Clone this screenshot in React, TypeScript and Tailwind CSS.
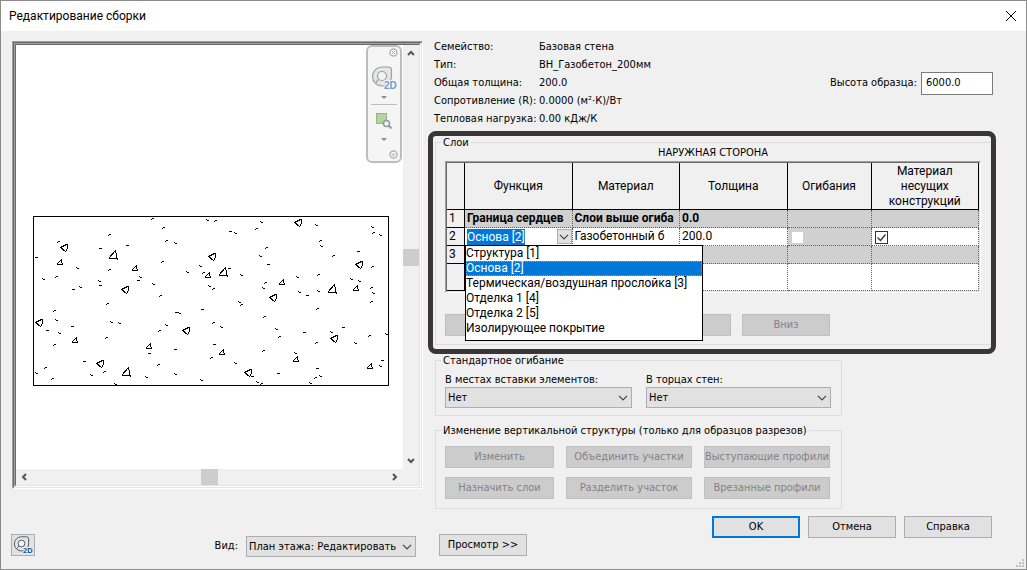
import type { ButtonHTMLAttributes, ReactNode } from "react";
import clsx from "clsx";

type Mark = "/" | "-" | "\\";

const markPaths: Record<Mark, string> = {
  "/": "m0 1h1m0 -1h2",
  "-": "h3",
  "\\": "h1m0 1h2",
};

const marks: Record<Mark, [number, number][]> = {
  "/": [
    [25, 25], [76, 18], [119, 2], [130, 11], [133, 24], [23, 60], [76, 53],
    [129, 45], [170, 56], [127, 79], [180, 72], [74, 87], [21, 94], [21, 128],
    [73, 121], [12, 151], [19, 162], [71, 155], [125, 148], [126, 114],
    [180, 106], [178, 141], [182, 4], [223, 12], [340, 16], [287, 24],
    [233, 31], [300, 39], [339, 50], [285, 58], [232, 66], [338, 71],
    [338, 85], [208, 88], [284, 92], [231, 100], [246, 120], [283, 126],
    [336, 119], [230, 134], [282, 161], [228, 167],
  ],
  "-": [
    [3, 41], [67, 32], [94, 29], [105, 64], [67, 69], [40, 73], [14, 114],
    [39, 110], [51, 145], [116, 137], [142, 133], [143, 96], [169, 93],
    [181, 128], [197, 15], [235, 48], [325, 35], [196, 52], [274, 79],
    [271, 116], [310, 111], [349, 144], [284, 152], [245, 157], [219, 160],
  ],
  "\\": [
    [142, 26], [44, 51], [10, 62], [167, 49], [154, 55], [107, 60], [66, 64],
    [47, 70], [120, 67], [176, 69], [23, 103], [26, 116], [78, 105],
    [86, 106], [3, 156], [58, 158], [82, 167], [113, 160], [142, 157],
    [133, 108], [146, 96], [168, 163], [174, 3], [202, 16], [228, 5],
    [283, 8], [339, 10], [347, 18], [288, 29], [227, 39], [208, 58],
    [264, 60], [318, 62], [326, 64], [230, 71], [266, 75], [285, 74],
    [340, 76], [206, 85], [188, 110], [243, 112], [298, 115], [322, 126],
    [353, 117], [202, 146], [262, 136], [347, 149], [287, 159], [277, 166],
    [224, 165],
  ],
};

const stones = [
  {
    d: "m-4 0l6 -3h1v4l-2 3l-5 -4",
    at: [
      [31, 31], [92, 73], [179, 40], [6, 106], [153, 114], [67, 147],
      [265, 6], [240, 81], [326, 48], [301, 122], [215, 156],
    ],
  },
  {
    d: "m-4 2l5 -5l1 6m0 -1h-6",
    at: [
      [27, 46], [102, 52], [175, 59], [42, 124], [116, 130], [249, 66],
      [323, 72], [189, 136], [263, 143], [337, 150],
    ],
  },
  {
    d: "m-5 3l7 -8l2 10m0 -2h-9",
    at: [[80, 39], [93, 156], [190, 56], [299, 73]],
  },
];

const columns = ["Функция", "Материал", "Толщина", "Огибания"];

const functions = [
  "Структура [1]",
  "Основа [2]",
  "Термическая/воздушная прослойка [3]",
  "Отделка 1 [4]",
  "Отделка 2 [5]",
  "Изолирующее покрытие",
];

const info = [
  ["Семейство:", "Базовая стена"],
  ["Тип:", "ВН_Газобетон_200мм"],
  ["Общая толщина:", "200.0"],
  ["Сопротивление (R):", "0.0000 (м²·К)/Вт"],
  ["Тепловая нагрузка:", "0.00 кДж/К"],
];

const tableFont = "font-['Roboto','Noto_Sans',sans-serif] text-[12px]";

function Chevron({ className }: { className?: string }) {
  return (
    <svg
      viewBox="0 0 10 6"
      className={clsx("h-[6px] w-[10px] fill-none stroke-[#444]", className)}
    >
      <path d="M1 .8l4 4l4 -4" strokeWidth="1.2" />
    </svg>
  );
}

function Button({
  primary,
  className,
  ...props
}: ButtonHTMLAttributes<HTMLButtonElement> & { primary?: boolean }) {
  return (
    <button
      type="button"
      className={clsx(
        "h-[22px] whitespace-nowrap bg-[#e1e1e1] text-center leading-[18px]",
        "disabled:border-[#bfbfbf] disabled:bg-[#cccccc] disabled:text-[#838383]",
        primary ? "border-2 border-[#0078d7]" : "border border-[#adadad]",
        className,
      )}
      {...props}
    />
  );
}

function Select({
  id,
  value,
  className,
}: {
  id: string;
  value: string;
  className?: string;
}) {
  return (
    <div className={clsx("relative", className)}>
      <select
        id={id}
        className="block h-[21px] w-full appearance-none border border-[#adadad] bg-[#e1e1e1] pl-[2px] pt-px"
      >
        <option>{value}</option>
      </select>
      <Chevron className="pointer-events-none absolute right-1 top-2" />
    </div>
  );
}

function Group({
  title,
  className,
  children,
}: {
  title: string;
  className?: string;
  children: ReactNode;
}) {
  return (
    <fieldset
      className={clsx("min-w-0 border border-[#dcdcdc] pl-[9px]", className)}
    >
      <legend className="-ml-1 px-[2px] leading-[13px]">{title}</legend>
      {children}
    </fieldset>
  );
}

function ScrollArrow({ label, d }: { label: string; d: string }) {
  return (
    <button
      type="button"
      aria-label={label}
      className="grid size-[16px] shrink-0 place-items-center"
    >
      <svg
        viewBox="0 0 8 8"
        className="size-2 fill-none stroke-[#555] stroke-2"
      >
        <path d={d} />
      </svg>
    </button>
  );
}

function Wheel({ className }: { className?: string }) {
  return (
    <svg viewBox="0 0 24 24" className={clsx("overflow-visible", className)}>
      <g fill="none" stroke="currentColor" strokeWidth="1.2">
        <path
          d="M10 1H16.500Q19.500 1 19.500 4V10A9.500 9.500 0 1 1 10 1Z"
          fill="#e4e6ea"
        />
        <circle cx="10" cy="10" r="4.500" fill="#f4f4f4" />
        <path d="M6.500 13.500L4 16.500" />
      </g>
      <text
        x="12"
        y="23"
        className="font-['Liberation_Sans',sans-serif] text-[10px] font-bold"
        fill="var(--label)"
        stroke="#f4f4f4"
        strokeWidth="2"
        paintOrder="stroke"
      >
        2D
      </text>
    </svg>
  );
}

function NavigationBar() {
  return (
    <div className="absolute right-px top-0 flex h-[118px] w-[36px] flex-col items-center rounded-md border-2 border-[#bdbdbd] bg-[#f5f5f5]">
      <button
        type="button"
        aria-label="Закрыть"
        className="mr-[2px] mt-px self-end"
      >
        <svg viewBox="0 0 9 9" className="size-[9px]">
          <circle cx="4.500" cy="4.500" r="3.500" fill="#fff" stroke="#b5b5b5" strokeWidth="1.500" />
          <path d="M3 3l3 3M6 3l-3 3" stroke="#aaa" />
        </svg>
      </button>
      <button
        type="button"
        aria-label="Штурвал 2D"
        className="mr-px mt-[9px] text-[#9a9ea6] [--label:#6d9fcc]"
      >
        <Wheel className="size-6" />
      </button>
      <svg viewBox="0 0 6 4" className="mt-[6px] h-1 w-[6px]">
        <path d="M0 0h6l-3 3z" fill="#8a8a8a" />
      </svg>
      <hr className="mt-1 w-[26px] border-[#bdbdbd]" />
      <button
        type="button"
        aria-label="Показать область"
        className="mt-2"
      >
        <svg viewBox="0 0 16 16" className="size-4 fill-none">
          <rect
            x=".5"
            y=".5"
            width="10"
            height="10"
            fill="#b5d3a5"
            stroke="#8fbb7c"
          />
          <path d="M12 12l3.500 3.500" stroke="#999" strokeWidth="2" />
          <circle
            cx="10.500"
            cy="10.500"
            r="3"
            fill="#f2f5f8"
            stroke="#969696"
            strokeWidth="1.500"
          />
        </svg>
      </button>
      <svg viewBox="0 0 6 4" className="mt-[9px] h-1 w-[6px]">
        <path d="M0 0h6l-3 3z" fill="#8a8a8a" />
      </svg>
      <button
        type="button"
        aria-label="Настройка"
        className="mb-[2px] mr-[2px] mt-auto self-end"
      >
        <svg viewBox="0 0 9 9" className="size-[9px]">
          <circle cx="4.500" cy="4.500" r="3.500" fill="#fff" stroke="#b5b5b5" strokeWidth="1.500" />
          <path d="M2.500 4h4" stroke="#aaa" />
          <path d="M3 5h3l-1.500 1.500z" fill="#aaa" />
        </svg>
      </button>
    </div>
  );
}

function Preview() {
  return (
    <div className="border border-b-white border-l-[#a0a0a0] border-r-white border-t-[#a0a0a0]">
      <div className="border border-b-[#e3e3e3] border-l-[#696969] border-r-[#e3e3e3] border-t-[#696969]">
        <div className="border border-b-white border-l-[#a0a0a0] border-r-white border-t-[#a0a0a0]">
          <div className="border border-b-[#e3e3e3] border-l-[#696969] border-r-[#e3e3e3] border-t-[#696969]">
            <div className="flex">
              <div className="relative flex-1 bg-white pb-[83px] pl-[17px] pt-[171px]">
                <svg
                  viewBox="0 0 356 170"
                  shapeRendering="crispEdges"
                  className="h-[170px] w-[356px] fill-none stroke-black"
                >
                  <rect x=".5" y=".5" width="355" height="169" />
                  {(Object.keys(marks) as Mark[]).map((mark) =>
                    marks[mark].map(([x, y]) => (
                      <path
                        key={`${x}-${y}`}
                        d={`M${x - 1} ${y + 0.5}${markPaths[mark]}`}
                      />
                    )),
                  )}
                  {stones.map(({ d, at }) =>
                    at.map(([x, y]) => (
                      <path
                        key={`${x}-${y}`}
                        d={`M${x + 0.5} ${y + 0.5}${d}`}
                      />
                    )),
                  )}
                </svg>
                <NavigationBar />
              </div>
              <div className="flex w-4 flex-col items-center">
                <ScrollArrow label="Вверх" d="M1 6l3 -3l3 3" />
                <div className="my-auto h-[17px] w-full bg-[#cdcdcd]" />
                <ScrollArrow label="Вниз" d="M1 2l3 3l3 -3" />
              </div>
            </div>
            <div className="flex h-4 items-center pr-4">
              <ScrollArrow label="Влево" d="M6 1l-3 3l3 3" />
              <div className="mx-auto h-full w-[17px] bg-[#cdcdcd]" />
              <ScrollArrow label="Вправо" d="M2 1l3 3l-3 3" />
            </div>
          </div>
        </div>
      </div>
    </div>
  );
}

function RowNumber({ children }: { children?: ReactNode }) {
  return (
    <th
      scope="row"
      className="border-b border-r border-black bg-[#f0f0f0] pl-[2px] text-left font-normal"
    >
      {children}
    </th>
  );
}

const cell =
  "overflow-hidden whitespace-nowrap border-b border-r border-dotted border-[#606060] p-0 pl-[2px]";

function LayersTable() {
  return (
    <div className="border border-b-white border-l-[#a0a0a0] border-r-white border-t-[#a0a0a0]">
      <div className="border border-b-[#e3e3e3] border-l-[#696969] border-r-[#e3e3e3] border-t-[#696969]">
        <table
          className={clsx(
            "w-full table-fixed border-separate border-spacing-0 bg-white leading-[15px]",
            tableFont,
          )}
        >
          <colgroup>
            <col className="w-[18px]" />
            <col />
            <col />
            <col />
            <col className="w-[84px]" />
            <col />
          </colgroup>
          <thead>
            <tr className="h-[47px] bg-[#f0f0f0]">
              <td className="border-b border-r border-black" />
              {columns.map((name) => (
                <th
                  key={name}
                  scope="col"
                  className="border-b border-r border-black p-0 font-normal"
                >
                  {name}
                </th>
              ))}
              <th
                scope="col"
                className="border-b border-r border-black px-4 py-0 font-normal"
              >
                Материал несущих конструкций
              </th>
            </tr>
          </thead>
          <tbody>
            <tr className="h-[18px] bg-[#d0d0d0] font-bold">
              <RowNumber>1</RowNumber>
              <td className={cell}>Граница сердцев</td>
              <td className={cell}>Слои выше огиба</td>
              <td className={cell}>0.0</td>
              <td className={cell} />
              <td className={cell} />
            </tr>
            <tr className="h-[18px]">
              <RowNumber>2</RowNumber>
              <td className="relative border-b border-r border-dotted border-[#606060] p-0 pl-[2px]">
                <div className="flex h-[17px] items-center justify-between">
                  <input
                    aria-label="Функция"
                    defaultValue="Основа [2]"
                    className="field-sizing-content h-4 bg-[#0078d7] text-white"
                  />
                  <button
                    type="button"
                    aria-label="Список функций"
                    className="grid size-[15px] place-items-center border border-[#adadad] bg-[#e1e1e1]"
                  >
                    <Chevron />
                  </button>
                </div>
                <ul
                  role="listbox"
                  aria-label="Функция"
                  className="absolute left-0 top-[17px] z-10 w-[238px] border border-black bg-white pb-1"
                >
                  {functions.map((name) => {
                    const selected = name === "Основа [2]";
                    return (
                      <li
                        key={name}
                        role="option"
                        aria-selected={selected}
                        className={clsx(
                          "h-[15px] whitespace-nowrap",
                          selected &&
                            "bg-[#0078d7] text-white outline-1 -outline-offset-1 outline-dotted outline-[#ff8728]",
                        )}
                      >
                        {name}
                      </li>
                    );
                  })}
                </ul>
              </td>
              <td className={cell}>Газобетонный б</td>
              <td className={cell}>200.0</td>
              <td className={clsx(cell, "bg-[#d0d0d0]")}>
                <input
                  type="checkbox"
                  disabled
                  aria-label="Огибания"
                  className="ml-[2px] mt-[2px] block size-[11px] appearance-none bg-white"
                />
              </td>
              <td className={cell}>
                <div className="relative ml-px mt-[2px] size-[13px]">
                  <input
                    type="checkbox"
                    defaultChecked
                    aria-label="Материал несущих конструкций"
                    className="block size-[13px] appearance-none border border-[#333] bg-white"
                  />
                  <svg
                    viewBox="0 0 13 13"
                    className="pointer-events-none absolute inset-0 fill-none stroke-[#333]"
                  >
                    <path d="M2.500 6.500l3 3l5 -6" strokeWidth="1.300" />
                  </svg>
                </div>
              </td>
            </tr>
            <tr className="h-[18px] bg-[#d0d0d0]">
              <RowNumber>3</RowNumber>
              {[0, 1, 2, 3, 4].map((i) => (
                <td key={i} className={cell} />
              ))}
            </tr>
            <tr className="h-[27px]">
              <RowNumber />
              {[0, 1, 2, 3, 4].map((i) => (
                <td key={i} className={cell} />
              ))}
            </tr>
          </tbody>
        </table>
      </div>
    </div>
  );
}

export default function App() {
  return (
    <div className="flex min-h-screen flex-col border border-[#8c8c8c] bg-[#f0f0f0] font-['DejaVu_Sans_Condensed','DejaVu_Sans',sans-serif] text-[11px] leading-[14px] text-black">
      <header className="flex h-[30px] items-center justify-between bg-white pl-2 pr-[9px]">
        <h1 className={tableFont}>Редактирование сборки</h1>
        <button type="button" aria-label="Закрыть">
          <svg viewBox="0 0 12 12" className="size-3 stroke-black">
            <path d="M1 1l10 10M11 1l-10 10" />
          </svg>
        </button>
      </header>

      <main className="relative flex grow items-start">
        <div className="w-[427px] shrink-0 pl-[10px] pt-[10px]">
          <div className="ml-px mr-[5px]">
            <Preview />
          </div>
          <div className="mt-[45px] flex items-start pr-[12px]">
            <button
              type="button"
              aria-label="Штурвал"
              className="grid h-[22px] w-6 place-items-center border border-[#adadad] bg-[#e1e1e1] text-[#4b5058] [--label:#0c4c8c]"
            >
              <Wheel className="size-[18px]" />
            </button>
            <label htmlFor="view" className="ml-auto mr-2 mt-[5px]">
              Вид:
            </label>
            <Select
              id="view"
              value="План этажа: Редактировать"
              className="mt-[2px] w-[170px]"
            />
          </div>
        </div>

        <div className="min-w-0 flex-1 pr-[30px] pt-[7px]">
          <div className="flex items-center justify-between pl-[6px] pr-[3px]">
            <dl className="grid grid-cols-[105px_auto] leading-[18px]">
              {info.map(([name, value]) => (
                <div key={name} className="contents">
                  <dt className="whitespace-nowrap">{name}</dt>
                  <dd>{value}</dd>
                </div>
              ))}
            </dl>
            <div className="flex items-center gap-1">
              <label htmlFor="height">Высота образца:</label>
              <input
                id="height"
                defaultValue="6000.0"
                className="h-[23px] w-[72px] border border-[#7a7a7a] bg-white px-1 pb-[2px]"
              />
            </div>
          </div>

          <section className="mt-[3px] rounded-lg border-[5px] border-[#3a3637] pb-1 pl-[2px]">
            <Group title="Слои" className="border-r-0 pb-2 pr-[10px]">
              <p className="-mt-1 h-4 pt-px text-center">НАРУЖНАЯ СТОРОНА</p>
              <LayersTable />
              <div className="mt-[21px] flex gap-[11px]">
                <Button disabled aria-label="Вставить" className="w-[88px]" />
                <Button disabled aria-label="Удалить" className="w-[88px]" />
                <Button disabled aria-label="Вверх" className="w-[88px]" />
                <Button disabled className="w-[88px]">
                  Вниз
                </Button>
              </div>
            </Group>
          </section>

          <Group
            title="Стандартное огибание"
            className="ml-[7px] w-[407px] pb-[7px]"
          >
            <div className="mt-[5px] flex gap-[14px]">
              <div className="w-[187px]">
                <label htmlFor="inserts" className="block h-[15px] pt-px">
                  В местах вставки элементов:
                </label>
                <Select id="inserts" value="Нет" />
              </div>
              <div className="w-[185px]">
                <label htmlFor="ends" className="block h-[15px] pt-px">
                  В торцах стен:
                </label>
                <Select id="ends" value="Нет" />
              </div>
            </div>
          </Group>

          <Group
            title="Изменение вертикальной структуры (только для образцов разрезов)"
            className="ml-[7px] mt-2 w-[407px] pb-[9px]"
          >
            <div className="mt-[9px] grid grid-cols-[109px_126px_126px] gap-x-3 gap-y-[9px]">
              {[
                "Изменить",
                "Объединить участки",
                "Выступающие профили",
                "Назначить слои",
                "Разделить участок",
                "Врезанные профили",
              ].map((name) => (
                <Button key={name} disabled>
                  {name}
                </Button>
              ))}
            </div>
          </Group>

          <div className="mt-[7px] flex items-start gap-2 pl-[11px] pr-1">
            <Button className="mr-auto mt-[18px] w-[88px]">
              Просмотр &gt;&gt;
            </Button>
            <Button primary className="w-[88px]">
              OK
            </Button>
            <Button className="w-[88px]">Отмена</Button>
            <Button className="w-[88px]">Справка</Button>
          </div>
        </div>

        <svg
          viewBox="0 0 8 8"
          className="absolute bottom-[2px] right-[2px] size-2 fill-[#bfbfbf]"
        >
          <path d="M6 0h2v2h-2zM3 3h2v2h-2zM6 3h2v2h-2zM0 6h2v2h-2zM3 6h2v2h-2zM6 6h2v2h-2z" />
        </svg>
      </main>
    </div>
  );
}
